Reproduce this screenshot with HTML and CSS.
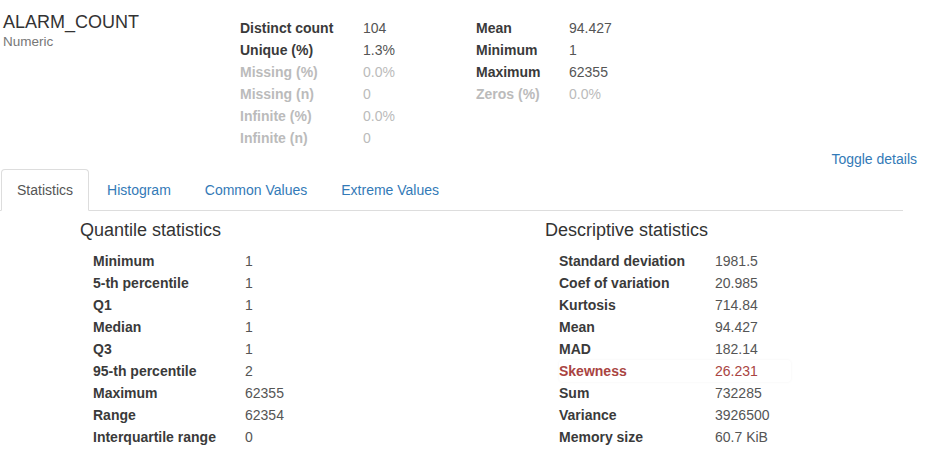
FILE: index.html
```html
<!DOCTYPE html>
<html>
<head>
<meta charset="utf-8">
<link rel="stylesheet" href="styles.css">
</head>
<body>
<div class="variable">
  <div class="head">
    <div class="title-col">
      <div class="var-name">ALARM_COUNT</div>
      <div class="var-type">Numeric</div>
    </div>
    <table class="stats stats-a">
      <tr><th>Distinct count</th><td>104</td></tr>
      <tr><th>Unique (%)</th><td>1.3%</td></tr>
      <tr class="ignore"><th>Missing (%)</th><td>0.0%</td></tr>
      <tr class="ignore"><th>Missing (n)</th><td>0</td></tr>
      <tr class="ignore"><th>Infinite (%)</th><td>0.0%</td></tr>
      <tr class="ignore"><th>Infinite (n)</th><td>0</td></tr>
    </table>
    <table class="stats stats-b">
      <tr><th>Mean</th><td>94.427</td></tr>
      <tr><th>Minimum</th><td>1</td></tr>
      <tr><th>Maximum</th><td>62355</td></tr>
      <tr class="ignore"><th>Zeros (%)</th><td>0.0%</td></tr>
    </table>
  </div>
  <div class="toggle-row"><a class="toggle" href="#">Toggle details</a></div>
  <ul class="tabs">
    <li class="tab active"><a href="#">Statistics</a></li>
    <li class="tab"><a href="#">Histogram</a></li>
    <li class="tab"><a href="#">Common Values</a></li>
    <li class="tab"><a href="#">Extreme Values</a></li>
  </ul>
  <div class="panes">
    <div class="pane pane-left">
      <h4 class="pane-title">Quantile statistics</h4>
      <table class="qtable qtable-left">
        <tr><th>Minimum</th><td>1</td></tr>
        <tr><th>5-th percentile</th><td>1</td></tr>
        <tr><th>Q1</th><td>1</td></tr>
        <tr><th>Median</th><td>1</td></tr>
        <tr><th>Q3</th><td>1</td></tr>
        <tr><th>95-th percentile</th><td>2</td></tr>
        <tr><th>Maximum</th><td>62355</td></tr>
        <tr><th>Range</th><td>62354</td></tr>
        <tr><th>Interquartile range</th><td>0</td></tr>
      </table>
    </div>
    <div class="pane pane-right">
      <h4 class="pane-title">Descriptive statistics</h4>
      <table class="qtable qtable-right">
        <tr><th>Standard deviation</th><td>1981.5</td></tr>
        <tr><th>Coef of variation</th><td>20.985</td></tr>
        <tr><th>Kurtosis</th><td>714.84</td></tr>
        <tr><th>Mean</th><td>94.427</td></tr>
        <tr><th>MAD</th><td>182.14</td></tr>
        <tr class="alert"><th>Skewness</th><td>26.231</td></tr>
        <tr><th>Sum</th><td>732285</td></tr>
        <tr><th>Variance</th><td>3926500</td></tr>
        <tr><th>Memory size</th><td>60.7 KiB</td></tr>
      </table>
    </div>
  </div>
</div>
</body>
</html>
```

FILE: styles.css
```css
* { box-sizing: border-box; }
html, body { margin: 0; padding: 0; background: #fff; }
body {
  font-family: "Liberation Sans", Arial, sans-serif;
  font-size: 14px;
  line-height: 20px;
  color: #333;
}
a { color: #337ab7; text-decoration: none; }

.head { display: flex; align-items: flex-start; }
.title-col { width: 240px; padding-left: 3px; padding-top: 12px; }
.var-name { font-size: 18px; line-height: 20px; color: #333; }
.var-type { font-size: 13.5px; line-height: 16px; color: #777; margin-top: 2px; }

.stats { border-collapse: collapse; margin-top: 17px; }
.stats th, .stats td {
  padding: 0; height: 22px; line-height: 22px; text-align: left; vertical-align: middle;
  white-space: nowrap;
}
.stats th { font-weight: bold; color: #3a3a3a; font-size: 14px; }
.stats td { color: #555; }
.stats-a { width: 236px; }
.stats-a th { width: 123px; }
.stats-b th { width: 93px; }
.stats .ignore th, .stats .ignore td { color: #bbb; }

.toggle-row { display: flex; justify-content: flex-end; padding-right: 8px; height: 20px; }
.toggle { line-height: 20px; }

.tabs {
  list-style: none; margin: 0; padding: 0 0 0 1px;
  width: 903px; display: flex;
  border-bottom: 1px solid #ddd;
}
.tab { margin-bottom: -1px; margin-right: 2px; }
.tab a {
  display: block; padding: 10px 15px; line-height: 20px;
  border: 1px solid transparent; border-radius: 4px 4px 0 0;
}
.tab.active a {
  color: #555; background: #fff;
  border-color: #ddd #ddd transparent #ddd;
}

.panes { display: grid; grid-template-columns: 465px 1fr; padding-left: 80px; }
.pane-title {
  margin: 9px 0 0 0; font-size: 18px; line-height: 20px; font-weight: normal; color: #333;
}
.qtable { border-collapse: collapse; margin-top: 10px; margin-left: 13px; }
.qtable-right { margin-left: 14px; }
.qtable th, .qtable td {
  padding: 0; height: 22px; line-height: 22px; text-align: left; white-space: nowrap;
}
.qtable th { font-weight: bold; color: #3a3a3a; }
.qtable td { color: #555; }
.qtable-left th { width: 152px; }
.qtable-right th { width: 156px; }
.qtable-right td { width: 76px; }
.qtable .alert th, .qtable .alert td { color: #a94442; }
.qtable .alert {
  box-shadow: 0 0 3px rgba(0, 0, 0, 0.05);
  border-radius: 4px;
}
```
